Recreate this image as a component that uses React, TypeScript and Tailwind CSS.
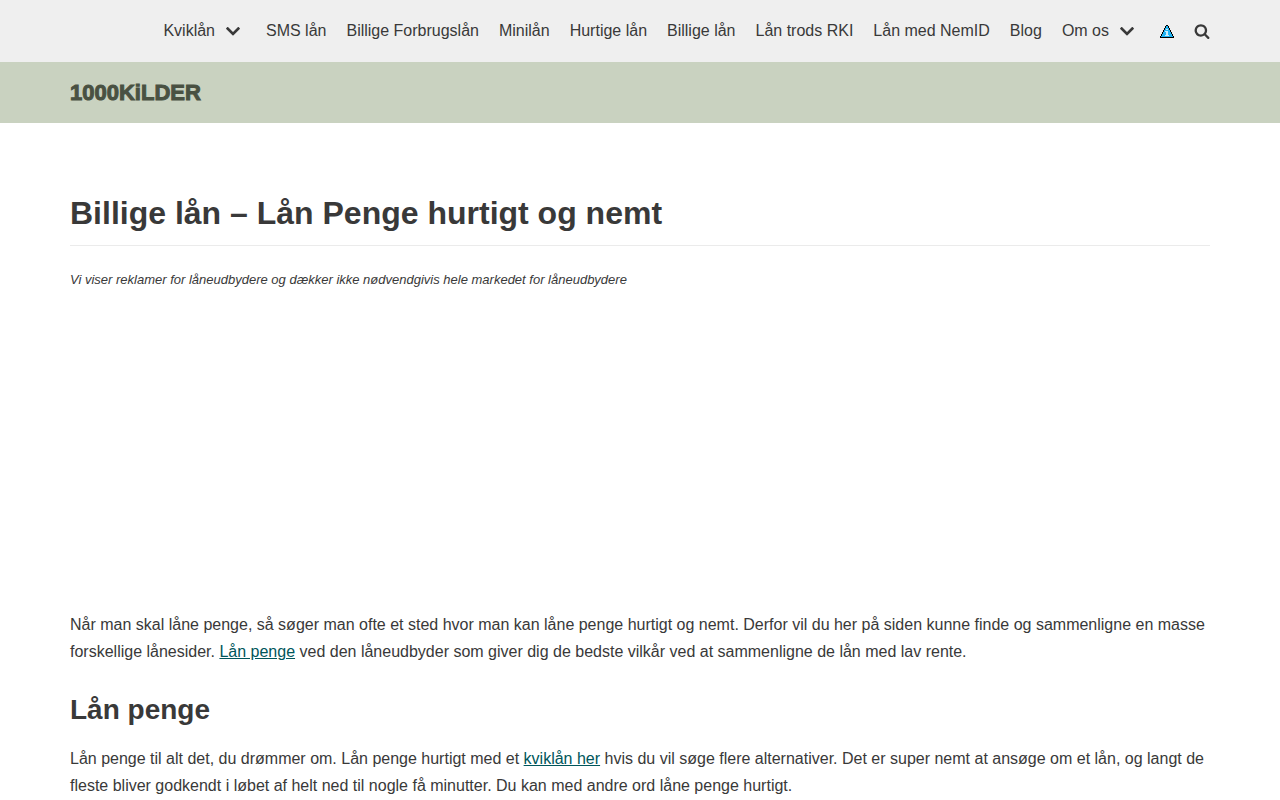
import React from "react";

type NavItem = { label: string; menu?: boolean };

const navItems: NavItem[] = [
  { label: "Kviklån", menu: true },
  { label: "SMS lån" },
  { label: "Billige Forbrugslån" },
  { label: "Minilån" },
  { label: "Hurtige lån" },
  { label: "Billige lån" },
  { label: "Lån trods RKI" },
  { label: "Lån med NemID" },
  { label: "Blog" },
  { label: "Om os", menu: true },
];

function Chevron() {
  return (
    <svg viewBox="0 0 448 512" className="h-4 w-4" fill="currentColor" aria-hidden="true">
      <path d="M207 390L6 188q-10-10 0-20l38-38q10-10 20 0l160 157 160-157q10-10 20 0l38 38q10 10 0 20L241 390q-17 14-34 0z" />
    </svg>
  );
}

function InfoTriangle() {
  return (
    <svg viewBox="0 0 14 13" className="h-[13px] w-[14px]" shapeRendering="crispEdges" aria-hidden="true">
      <path
        fill="#000"
        d="M6 0h2v1H6zM5 1h4v2H5zM4 3h6v2H4zM3 5h8v2H3zM2 7h10v2H2zM1 9h12v2H1zM0 11h14v2H0z"
      />
      <path
        fill="#1fb4f4"
        d="M6 1h2v2H6zM5 3h4v2H5zM4 5h6v2H4zM3 7h8v2H3zM2 9h10v2H2zM1 11h12v1H1z"
      />
      <path fill="#c8ecfb" d="M6 4h2v1H6zM6 6h2v5H6zM5 6h1v1H5zM5 10h4v1H5z" />
    </svg>
  );
}

function SearchIcon() {
  return (
    <svg viewBox="0 0 1792 1792" className="h-4 w-4" fill="currentColor" aria-hidden="true">
      <path d="M1216 832q0-185-131.500-316.500t-316.500-131.500-316.500 131.500-131.500 316.500 131.500 316.500 316.500 131.500 316.500-131.500 131.500-316.500zm512 832q0 52-38 90t-90 38q-54 0-90-38l-343-342q-179 124-399 124-143 0-273.500-55.500t-225-150-150-225-55.500-273.500 55.500-273.500 150-225 225-150 273.500-55.500 273.500 55.500 225 150 150 225 55.500 273.500q0 220-124 399l343 343q37 37 37 90z" />
    </svg>
  );
}

export default function App() {
  return (
    <div className="min-h-screen bg-white font-['Liberation_Sans',Arial,sans-serif] text-base text-[#393939]">
      <header>
        <div className="bg-[#efefef]">
          <nav className="mx-auto flex h-[62px] max-w-[1170px] items-center justify-end gap-5 px-[15px]">
            {navItems.map((item) => (
              <div key={item.label} className="flex items-center whitespace-nowrap">
                <a href="#">{item.label}</a>
                {item.menu && (
                  <button type="button" aria-label={`Vis undermenu for ${item.label}`} className="ml-2.5 mr-[5px]">
                    <Chevron />
                  </button>
                )}
              </div>
            ))}
            <a href="#" aria-label="Information">
              <InfoTriangle />
            </a>
            <button type="button" aria-label="Søg">
              <SearchIcon />
            </button>
          </nav>
        </div>
        <div className="bg-[#c9d2c0]">
          <div className="mx-auto flex h-[61px] max-w-[1170px] items-center px-[15px]">
            <a
              href="#"
              className="text-[22px] leading-none font-bold text-[#495142] [-webkit-text-stroke:1px_#495142]"
            >
              1000KiLDER
            </a>
          </div>
        </div>
      </header>
      <main className="mx-auto max-w-[1170px] px-[15px] pt-[60px]">
        <h1 className="border-b border-[#ebebeb] pt-[5px] pb-1.5 text-[32px] leading-[51px] font-bold">
          Billige lån – Lån Penge hurtigt og nemt
        </h1>
        <p className="mt-6 text-[13px] leading-5 italic">
          Vi viser reklamer for låneudbydere og dækker ikke nødvendgivis hele markedet for låneudbydere
        </p>
        <p className="mt-[321px] leading-[27px]">
          Når man skal låne penge, så søger man ofte et sted hvor man kan låne penge hurtigt og nemt. Derfor vil du her
          på siden kunne finde og sammenligne en masse forskellige lånesider.{" "}
          <a href="#" className="text-[#00565b] underline">Lån penge</a> ved den låneudbyder som giver dig de bedste
          vilkår ved at sammenligne de lån med lav rente.
        </p>
        <h2 className="mt-[27px] text-[28px] leading-9 font-bold">Lån penge</h2>
        <p className="mt-[17px] leading-[27px]">
          Lån penge til alt det, du drømmer om. Lån penge hurtigt med et{" "}
          <a href="#" className="text-[#00565b] underline">kviklån her</a> hvis du vil søge flere alternativer. Det er
          super nemt at ansøge om et lån, og langt de fleste bliver godkendt i løbet af helt ned til nogle få minutter.
          Du kan med andre ord låne penge hurtigt.
        </p>
      </main>
    </div>
  );
}
